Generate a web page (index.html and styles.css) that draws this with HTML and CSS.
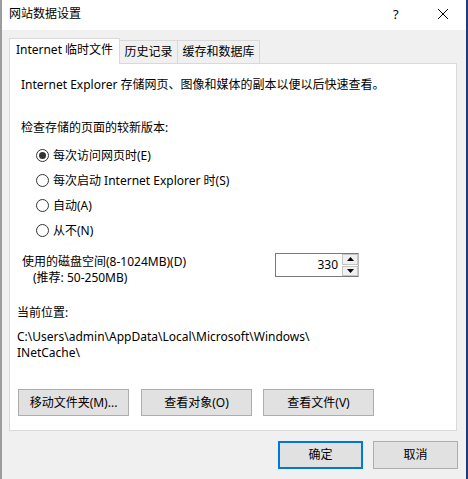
FILE: index.html
```html
<!DOCTYPE html>
<html lang="zh-CN">
<head>
<meta charset="utf-8">
<title>网站数据设置</title>
<link rel="stylesheet" href="styles.css">
</head>
<body>
<div class="window">
  <div class="titlebar">
    <span class="title">网站数据设置</span>
    <span class="help">?</span>
    <span class="close"><svg width="12" height="12" viewBox="0 0 12 12"><path d="M1 1 L11 11 M11 1 L1 11" stroke="#000" stroke-width="1" fill="none"/></svg></span>
  </div>
  <div class="tabs">
    <div class="tab active">Internet 临时文件</div>
    <div class="tab tab-history">历史记录</div>
    <div class="tab tab-cache">缓存和数据库</div>
  </div>
  <div class="panel">
    <p class="intro">Internet Explorer 存储网页、图像和媒体的副本以便以后快速查看。</p>
    <p class="label">检查存储的页面的较新版本:</p>
    <div class="radios">
      <div class="radio"><span class="circle checked"></span>每次访问网页时(E)</div>
      <div class="radio"><span class="circle"></span>每次启动 Internet Explorer 时(S)</div>
      <div class="radio"><span class="circle"></span>自动(A)</div>
      <div class="radio"><span class="circle"></span>从不(N)</div>
    </div>
    <div class="disk">
      <div class="disk-text">
        <div>使用的磁盘空间(8-1024MB)(D)</div>
        <div class="rec">(推荐: 50-250MB)</div>
      </div>
      <div class="spinner">
        <div class="spin-value">330</div>
        <div class="spin-btns">
          <div class="spin"><svg width="7" height="4" viewBox="0 0 7 4"><path d="M0 4 L3.5 0 L7 4 Z" fill="#000"/></svg></div>
          <div class="spin"><svg width="7" height="4" viewBox="0 0 7 4"><path d="M0 0 L7 0 L3.5 4 Z" fill="#000"/></svg></div>
        </div>
      </div>
    </div>
    <p class="loc-label">当前位置:</p>
    <p class="path">C:\Users\admin\AppData\Local\Microsoft\Windows\<br>INetCache\</p>
    <div class="actions">
      <button class="btn">移动文件夹(M)...</button>
      <button class="btn">查看对象(O)</button>
      <button class="btn">查看文件(V)</button>
    </div>
  </div>
  <div class="footer">
    <button class="btn dlg default">确定</button>
    <button class="btn dlg">取消</button>
  </div>
</div>
</body>
</html>
```

FILE: styles.css
```css
* { box-sizing: border-box; }
html, body { margin: 0; padding: 0; }
body {
  width: 468px;
  height: 479px;
  overflow: hidden;
  background: #f0f0f0;
  font-family: "Noto Sans", "Noto Sans CJK SC", sans-serif;
  font-size: 12px;
  line-height: 16px;
  color: #000;
}
.window {
  width: 468px;
  height: 479px;
  border-left: 2px solid #9c9c9c;
  border-right: 2px solid #1c3d7a;
  background: #f0f0f0;
}
.titlebar {
  height: 30px;
  background: #fff;
  display: flex;
  align-items: center;
  padding-left: 7px;
  padding-bottom: 2px;
}
.title { flex: 1; }
.help { width: 14px; margin-right: 30px; font-size: 13px; }
.close { width: 12px; height: 12px; margin-right: 17px; display: flex; }
.tabs {
  display: flex;
  align-items: flex-end;
  margin-top: 8px;
  padding-left: 7px;
  height: 25px;
}
.tab {
  height: 23px;
  padding-top: 3px;
  text-align: center;
  border: 1px solid #d9d9d9;
  border-bottom: none;
  border-left: none;
  background: #f0f0f0;
  white-space: nowrap;
}
.tab.active {
  width: 111px;
  height: 26px;
  margin-bottom: -1px;
  background: #fff;
  border-left: 1px solid #d9d9d9;
  position: relative;
  z-index: 1;
}
.tab-history { width: 58px; }
.tab-cache { width: 82px; }
.panel {
  margin-left: 7px;
  width: 448px;
  height: 368px;
  background: #fff;
  border: 1px solid #d9d9d9;
}
p { margin: 0; }
.intro { margin: 13px 0 0 11px; }
.label { margin: 27px 0 0 11px; }
.radios { margin-top: 7px; margin-left: 26px; }
.radio {
  height: 25px;
  display: flex;
  align-items: center;
}
.circle {
  width: 13px;
  height: 13px;
  border: 1px solid #333;
  border-radius: 50%;
  margin-right: 4px;
  display: flex;
  align-items: center;
  justify-content: center;
  flex: none;
}
.circle.checked::after {
  content: "";
  width: 7px;
  height: 7px;
  border-radius: 50%;
  background: #333;
}
.disk {
  display: flex;
  margin-top: 10px;
  margin-left: 12px;
}
.disk-text { width: 253px; padding-top: 1px; }
.rec { padding-left: 11px; }
.spinner {
  display: flex;
  height: 24px;
  border: 1px solid #7a7a7a;
  border-right-color: #b9b9b9;
}
.spin-value {
  width: 66px;
  text-align: right;
  padding-right: 4px;
  line-height: 22px;
}
.spin-btns {
  width: 16px;
  display: flex;
  flex-direction: column;
  gap: 1px;
}
.spin {
  flex: 1;
  background: #f0f0f0;
  border: 1px solid #c6c6c6;
  display: flex;
  align-items: center;
  justify-content: center;
}
.loc-label { margin: 19px 0 0 7px; }
.path { margin: 8px 0 0 7px; }
.actions {
  display: flex;
  gap: 12px;
  margin: 28px 0 0 8px;
}
.btn {
  width: 111px;
  height: 27px;
  background: #e1e1e1;
  border: 1px solid #adadad;
  font: inherit;
  color: #000;
  padding: 0;
  margin: 0;
}
.actions .btn:nth-child(3) { margin-left: -1px; }
.footer {
  display: flex;
  justify-content: flex-end;
  gap: 10px;
  margin-top: 10px;
  padding-right: 8px;
}
.btn.dlg { width: 85px; height: 28px; }
.btn.default { border: 2px solid #0078d7; }
```
